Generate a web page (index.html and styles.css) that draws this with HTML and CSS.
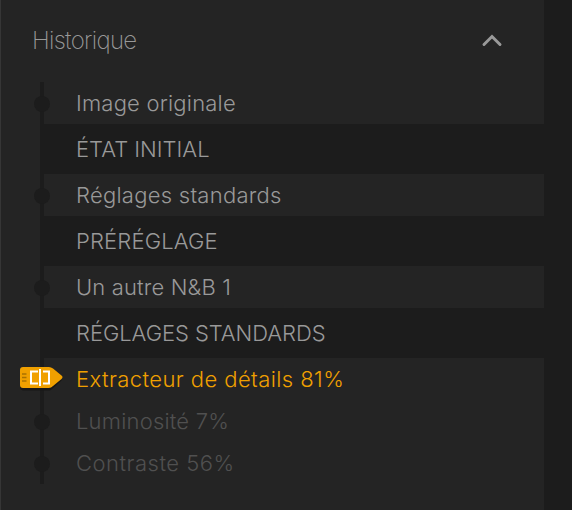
FILE: index.html
```
<!DOCTYPE html>
<html lang="fr">

<head>
    <meta charset="UTF-8">
    <meta name="viewport" content="width=device-width, initial-scale=1.0">
    <title>Historique</title>
    <link rel="stylesheet" href="styles.css">
</head>

<body>
    <div class="panel">
        <div class="header">
            <h2>Historique</h2>
            <svg class="chevron" width="22" height="14" viewBox="0 0 22 14">
                <path d="M3 10.500 L11 2.500 L19 10.500" />
            </svg>
        </div>
        <ul class="history">
            <li class="step"><span class="original">Image originale</span></li>
            <li class="group"><span class="initial">ÉTAT INITIAL</span></li>
            <li class="step"><span class="standard">Réglages standards</span></li>
            <li class="group"><span class="preset">PRÉRÉGLAGE</span></li>
            <li class="step"><span class="other">Un autre N&amp;B 1</span></li>
            <li class="group"><span class="settings">RÉGLAGES STANDARDS</span></li>
            <li class="step current">
                <svg class="marker" width="46" height="28" viewBox="0 0 46 28">
                    <path class="shadow" d="M4 5 H32 L43 14 Q36 21 31 24.500 H4 Q1 24 1 21 V8 Z" />
                    <path class="tag" d="M4 1 H30 Q32 1 34 2.500 L42.500 9.500 Q44.500 11 42.500 13 L34 20 Q32 22 30 22 H4 Q1 22 1 19 V4 Q1 1 4 1 Z" />
                    <path class="grip" d="M3 8 H7.500 M3 11.500 H7.500 M3 15 H7.500" />
                    <path class="frame" d="M19 5.500 H12 V17.500 H19 M24 5.500 H30 V17.500 H24" />
                    <path class="bar" d="M21 3 V20" />
                </svg>
                <span class="details">Extracteur de détails 81%</span>
            </li>
            <li class="step disabled"><span class="light">Luminosité 7%</span></li>
            <li class="step disabled"><span class="contrast">Contraste 56%</span></li>
        </ul>
    </div>
</body>

</html>
```
FILE: styles.css
```
body {
    font-family: Inter, "Liberation Sans", sans-serif;
    background-color: #1c1c1c;
    margin: 0;
    color: #999;
}

.panel {
    background-color: #242424;
    border-left: 1px solid #363636;
    box-sizing: border-box;
    width: 544px;
    height: 510px;
}

.header {
    display: flex;
    justify-content: space-between;
    align-items: center;
    height: 82px;
    padding: 0 41px 0 31px;
    box-sizing: border-box;
}

h2 {
    margin: 0 0 2px;
    font-size: 24px;
    font-weight: 250;
    letter-spacing: -0.7px;
}

.chevron {
    fill: none;
    stroke: #999;
    stroke-width: 3;
    stroke-linecap: round;
}

.history {
    list-style: none;
    margin: 0 0 0 39px;
    padding: 0;
    font-size: 22px;
    font-weight: 360;
}

.step,
.group {
    display: flex;
    align-items: center;
    box-sizing: border-box;
    position: relative;
    height: 42px;
    padding: 0 0 0 32px;
    border-left: 4px solid #1c1c1c;
    white-space: nowrap;
}

.group {
    height: 50px;
    background-color: #1c1c1c;
}

/* dot on the timeline */
.step::before {
    content: "";
    position: absolute;
    left: -10px;
    top: 14px;
    width: 16px;
    height: 16px;
    border-radius: 50%;
    background-color: #1c1c1c;
}

.current::before {
    display: none;
}

.current {
    color: #f0a000;
}

.disabled {
    color: #505050;
}

.original {
    letter-spacing: 0.2px;
}

.initial {
    letter-spacing: 0;
}

.standard {
    letter-spacing: 0.26px;
}

.preset {
    letter-spacing: 0.15px;
}

.other {
    letter-spacing: 0.14px;
}

.settings {
    letter-spacing: -0.07px;
}

.details {
    letter-spacing: 0.42px;
}

.light {
    letter-spacing: 0.2px;
}

.contrast {
    letter-spacing: 0.5px;
}

.marker {
    position: absolute;
    left: -25px;
    top: 8px;
    fill: none;
}

.shadow {
    fill: #171717;
}

.tag {
    fill: #f0a000;
}

.grip {
    stroke: #a97100;
    stroke-width: 1.5;
}

.frame {
    stroke: #fff;
    stroke-width: 2;
}

.bar {
    stroke: #fff;
    stroke-width: 2;
}
```
